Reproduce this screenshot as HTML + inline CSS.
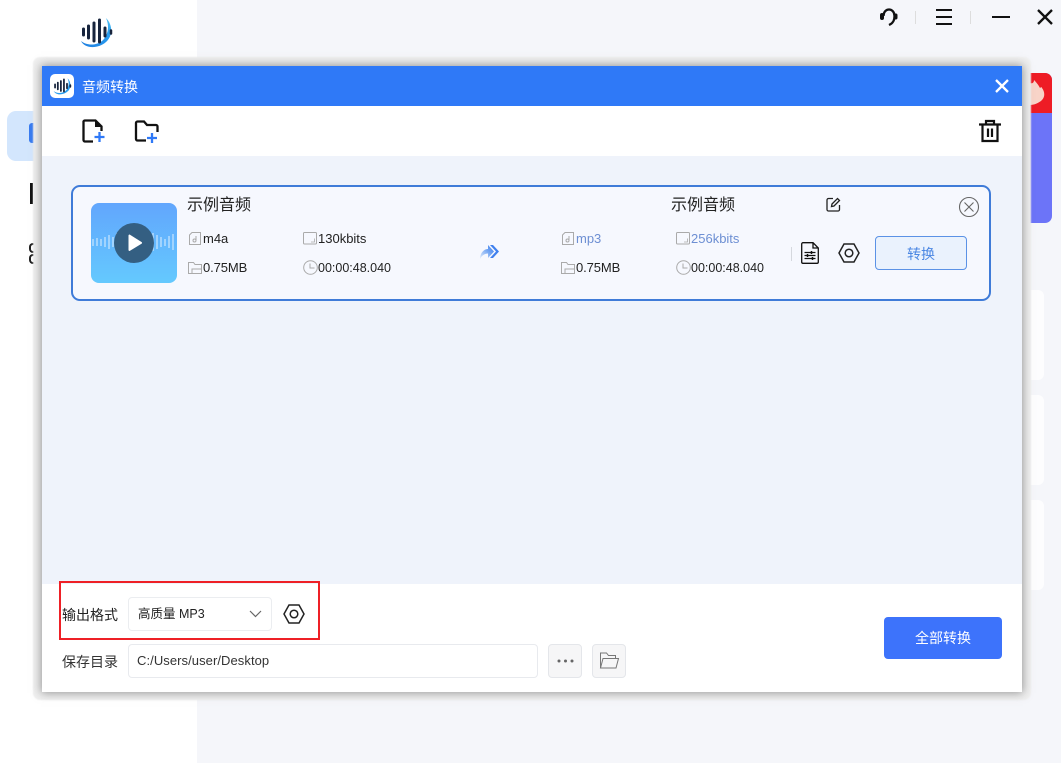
<!DOCTYPE html>
<html lang="zh-CN"><head><meta charset="utf-8"><title>音频转换</title>
<style>
*{box-sizing:border-box}
html,body{margin:0;padding:0;width:1061px;height:763px;overflow:hidden;background:#f5f6fa;font-family:"Liberation Sans","Noto Sans CJK SC",sans-serif;color:#222}
.a{position:absolute}
.t{position:absolute;white-space:nowrap;line-height:16px;font-size:12.5px;color:#222}
svg{position:absolute;overflow:visible}
</style></head><body>
<!-- background -->
<div class="a" style="left:0;top:0;width:197px;height:763px;background:#fff"></div>
<div class="a" style="left:7px;top:111px;width:60px;height:50px;background:#d3e6fd;border-radius:9px"></div>
<div class="a" style="left:29px;top:123px;width:8px;height:20px;background:#3a7cf0;border-radius:3px 0 0 3px"></div>
<div class="a" style="left:30px;top:183px;width:3px;height:21px;background:#111"></div>
<div class="a" style="left:29px;top:243px;width:6px;height:10px;border:2px solid #222;border-right:0;border-radius:4px 0 0 4px"></div>
<div class="a" style="left:29px;top:254px;width:6px;height:10px;border:2px solid #222;border-right:0;border-radius:4px 0 0 4px"></div>
<!-- logo -->
<svg style="left:78px;top:14px" width="36" height="36" viewBox="0 0 36 36"><defs><linearGradient id="sw" x1="0" y1="1" x2="1" y2="0"><stop offset="0" stop-color="#1f7fe0"/><stop offset=".7" stop-color="#2a9ff0"/><stop offset="1" stop-color="#58c8f5"/></linearGradient></defs><path d="M3 27C9 32 20 32 26 25 31 18 31 11 28 4 35 11 35 22 28 28 20 35 7 35 3 27Z" fill="url(#sw)"/><g stroke="#17243d" stroke-width="3" stroke-linecap="round"><path d="M5.500 15v6M10.500 12v12M16 9v18M21.500 6v22M27 14v8"/></g><path d="M33 16.500v3" stroke="#17243d" stroke-width="2.500" stroke-linecap="round"/></svg>
<!-- top icons -->
<svg style="left:879px;top:7px" width="20" height="20" viewBox="0 0 20 20" fill="none" stroke="#111" stroke-width="2.300"><path d="M4.500 9C4.500 5 7 2.500 10 2.500S15.500 5 15.500 9 14.500 16 10 18"/><rect x="1.500" y="6.500" width="3" height="6" rx="1.500" fill="#111" stroke-width="1"/><rect x="15.500" y="7" width="2.500" height="5" rx="1.200" fill="#111" stroke-width="1"/></svg>
<div class="a" style="left:915px;top:11px;width:1px;height:13px;background:#ddd"></div>
<div class="a" style="left:936px;top:9px;width:16px;height:16px;border-top:2px solid #111;border-bottom:2px solid #111"></div>
<div class="a" style="left:936px;top:16px;width:16px;height:2px;background:#111"></div>
<div class="a" style="left:970px;top:11px;width:1px;height:13px;background:#ddd"></div>
<div class="a" style="left:992px;top:16px;width:18px;height:2px;background:#111"></div>
<svg style="left:1037px;top:9px" width="16" height="16" fill="none" stroke="#111" stroke-width="2.300"><path d="M1 1l14 14M15 1L1 15"/></svg>
<!-- right peek -->
<div class="a" style="left:1030px;top:73px;width:22px;height:150px;background:#6c74f8;border-radius:0 7px 7px 0"></div>
<div class="a" style="left:1030px;top:73px;width:22px;height:40px;background:#ee1c25;border-radius:0 7px 0 0;overflow:hidden"></div>
<svg style="left:1030px;top:80px" width="17" height="26"><path d="M0 3C3 4 4 2 4 0 7 3 9 6 10 8 11 7 12 7 12 8 15 12 15 17 12 20 9 23 4 25 0 25Z" fill="#f8d4c8"/></svg>
<div class="a" style="left:1030px;top:290px;width:14px;height:90px;background:#fdfdfe;border-radius:0 6px 6px 0"></div>
<div class="a" style="left:1030px;top:395px;width:14px;height:90px;background:#fdfdfe;border-radius:0 6px 6px 0"></div>
<div class="a" style="left:1030px;top:500px;width:14px;height:90px;background:#fdfdfe;border-radius:0 6px 6px 0"></div>
<!-- dialog shadow band -->
<div class="a" style="left:33px;top:57px;width:998px;height:643px;background:#f0f0f0;border-radius:7px;filter:blur(.6px)"></div>
<div class="a" style="left:42px;top:66px;width:980px;height:626px;box-shadow:0 0 9px 1px rgba(90,90,90,.6)"></div>
<!-- dialog -->
<div class="a" style="left:42px;top:66px;width:980px;height:626px;background:#eff3fb"></div>
<div class="a" style="left:42px;top:66px;width:980px;height:40px;background:#2f79f7"></div>
<div class="a" style="left:42px;top:106px;width:980px;height:50px;background:#fff"></div>
<div class="a" style="left:42px;top:584px;width:980px;height:108px;background:#fff"></div>
<!-- title -->
<div class="a" style="left:50px;top:74px;width:24px;height:24px;background:#fff;border-radius:5px"></div>
<svg style="left:52px;top:76px" width="20" height="20" viewBox="0 0 36 36"><path d="M3 27C9 32 20 32 26 25 31 18 31 11 28 4 35 11 35 22 28 28 20 35 7 35 3 27Z" fill="#2a9ff0"/><g stroke="#17243d" stroke-width="3.200" stroke-linecap="round"><path d="M5.500 15v6M10.500 12v12M16 9v18M21.500 6v22M27 14v8M33 16.500v3"/></g></svg>
<div class="t" style="left:82px;top:79px;color:#fff;font-size:14px">音频转换</div>
<svg style="left:996px;top:80px" width="12" height="12" fill="none" stroke="#fff" stroke-width="2.300"><path d="M0 0l12 12M12 0L0 12"/></svg>
<!-- toolbar -->
<svg style="left:82px;top:119px" width="24" height="24" viewBox="0 0 24 24" fill="none"><path d="M11 22.500H3a1.500 1.500 0 0 1-1.500-1.500V2.500A1.500 1.500 0 0 1 3 1.500h10.500l6 6V12" stroke="#111" stroke-width="2.300"/><path d="M13 2l6 6h-6Z" fill="#111"/><path d="M17.500 13v10M12.500 18h10" stroke="#2f79f7" stroke-width="2.300"/></svg>
<svg style="left:135px;top:120px" width="25" height="23" viewBox="0 0 25 23" fill="none"><path d="M11 20.500H2.500A1.500 1.500 0 0 1 1 19V3A1.500 1.500 0 0 1 2.500 1.500H9l3 3.500h9a1.500 1.500 0 0 1 1.500 1.500V12" stroke="#111" stroke-width="2.300"/><path d="M17 13v10M12 18h10" stroke="#2f79f7" stroke-width="2.300"/></svg>
<svg style="left:979px;top:120px" width="22" height="22" viewBox="0 0 22 22" fill="none" stroke="#111" stroke-width="2.200"><path d="M0 4.500h22M7 4V1h8v3M3.500 5v16h15V5M9 8.500v8.500M13 8.500v8.500"/></svg>
<!-- card -->
<div class="a" style="left:71px;top:185px;width:920px;height:116px;background:#f6f8fe;border:2px solid #3f7bd8;border-radius:9px"></div>
<div class="a" style="left:91px;top:203px;width:86px;height:80px;border-radius:8px;background:linear-gradient(#62a6fd,#64c9fe)"></div>
<svg style="left:91px;top:222px" width="86" height="40" stroke="#fff" stroke-opacity=".4" stroke-width="2"><path d="M2 17v7M6 16v8M10 17v7M14 15v10M18 13v14M22 15v10M26 11v18M30 15v10M34 9v22M38 5v30M42 9v22M46 5v30M50 9v22M54 13v14M58 15v10M62 11v18M66 13v14M70 15v10M74 17v7M78 14v12M82 12v16"/></svg>
<div class="a" style="left:114px;top:223px;width:40px;height:40px;border-radius:50%;background:#345f82"></div>
<svg style="left:114px;top:223px" width="40" height="40"><path d="M14.500 12.500a1 1 0 0 1 1.500-.8L27.500 19a1 1 0 0 1 0 1.800L16 27.800a1 1 0 0 1-1.500-.8Z" fill="#fff"/></svg>
<div class="t" style="left:187px;top:197px;font-size:16px;line-height:18px">示例音频</div>
<div class="t" style="left:671px;top:197px;font-size:16px;line-height:18px">示例音频</div>
<svg style="left:826px;top:197px" width="15" height="15" viewBox="0 0 15 15" fill="none" stroke="#222" stroke-width="1.300"><path d="M7 1.500H2.500a1.500 1.500 0 0 0-1.500 1.500v9.500A1.500 1.500 0 0 0 2.500 14H12a1.500 1.500 0 0 0 1.500-1.500V8M5.500 9.500l.5-2.500 5.500-5.500 2 2L8 9Z"/></svg>
<svg style="left:959px;top:197px" width="20" height="20" fill="none" stroke="#666" stroke-width="1.100"><circle cx="10" cy="10" r="9.500"/><path d="M5.500 5.500l9 9M14.500 5.500l-9 9"/></svg>
<!-- meta -->
<svg style="left:189px;top:232px" width="13" height="13" fill="none" stroke="#aaa"><path d="M.5 3L3 .5h8.500v12H.5Z"/><circle cx="5.500" cy="8.500" r="1.500"/><path d="M7 8.500V4"/></svg>
<div class="t" style="left:203px;top:231px;font-size:13px">m4a</div>
<svg style="left:303px;top:232px" width="14" height="13" fill="none" stroke="#aaa"><rect x=".5" y=".5" width="13" height="11.500" rx="1"/><path d="M11.500 6.500v3.500H8" stroke-width=".8"/></svg>
<div class="t" style="left:318px;top:231px;font-size:13px">130kbits</div>
<svg style="left:188px;top:261px" width="14" height="13" fill="none" stroke="#aaa"><path d="M.5 12.500V1.500h5l1.500 2h6.500v9ZM4 12.500V8h9.500"/></svg>
<div class="t" style="left:203px;top:260px;font-size:13px;letter-spacing:-.1px">0.75MB</div>
<svg style="left:303px;top:260px" width="15" height="15" fill="none" stroke="#aaa"><circle cx="7.500" cy="7.500" r="6.800"/><path d="M7 3.500v4.500h4.500"/></svg>
<div class="t" style="left:318px;top:260px">00:00:48.040</div>
<svg style="left:480px;top:244px" width="20" height="17"><defs><linearGradient id="ar" x1="0" y1="1" x2="1" y2="0"><stop offset="0" stop-color="#e3edfc"/><stop offset=".6" stop-color="#6ea2f2"/><stop offset="1" stop-color="#3f80ee"/></linearGradient></defs><path d="M0 15C0 9 4 5 8 5V1l6 6.500-6 6.500V9.500C5 9.500 2 11 0 15Z" fill="url(#ar)"/><path d="M10 1l3 0 6 6.500-6 6.500-3 0 6-6.500Z" fill="#3f80ee"/></svg>
<svg style="left:562px;top:232px" width="13" height="13" fill="none" stroke="#aaa"><path d="M.5 3L3 .5h8.500v12H.5Z"/><circle cx="5.500" cy="8.500" r="1.500"/><path d="M7 8.500V4"/></svg>
<div class="t" style="left:576px;top:231px;color:#6d8fd3;font-size:13px">mp3</div>
<svg style="left:676px;top:232px" width="14" height="13" fill="none" stroke="#aaa"><rect x=".5" y=".5" width="13" height="11.500" rx="1"/><path d="M11.500 6.500v3.500H8" stroke-width=".8"/></svg>
<div class="t" style="left:691px;top:231px;color:#6d8fd3;font-size:13px">256kbits</div>
<svg style="left:561px;top:261px" width="14" height="13" fill="none" stroke="#aaa"><path d="M.5 12.500V1.500h5l1.500 2h6.500v9ZM4 12.500V8h9.500"/></svg>
<div class="t" style="left:576px;top:260px;font-size:13px;letter-spacing:-.1px">0.75MB</div>
<svg style="left:676px;top:260px" width="15" height="15" fill="none" stroke="#aaa"><circle cx="7.500" cy="7.500" r="6.800"/><path d="M7 3.500v4.500h4.500"/></svg>
<div class="t" style="left:691px;top:260px">00:00:48.040</div>
<div class="a" style="left:791px;top:247px;width:1px;height:14px;background:#d5d8de"></div>
<svg style="left:801px;top:242px" width="18" height="22" viewBox="0 0 18 22" fill="none" stroke="#111" stroke-width="1.300"><path d="M12 .7H2A1.300 1.300 0 0 0 .7 2v18A1.300 1.300 0 0 0 2 21.300h14a1.300 1.300 0 0 0 1.300-1.300V6ZM12 .7V6h5.300M3.500 10.500h11M3.500 13.500h11M3.500 16.500h11"/><path d="M10.500 9v3M6.500 12v3M11.500 15v3" stroke-width="1.500"/></svg>
<svg style="left:838px;top:243px" width="22" height="20" viewBox="0 0 22 20" fill="none" stroke="#222" stroke-width="1.500"><path d="M6 1h10l5 9-5 9H6L1 10Z"/><circle cx="11" cy="10" r="3.800"/></svg>
<div class="a" style="left:875px;top:236px;width:92px;height:34px;background:#eaf2fd;border:1px solid #5b92e6;border-radius:4px;text-align:center;line-height:34px;font-size:14px;color:#4b87e3">转换</div>
<!-- bottom -->
<div class="a" style="left:59px;top:581px;width:261px;height:59px;border:2px solid #ee2026"></div>
<div class="t" style="left:62px;top:607px;font-size:14px">输出格式</div>
<div class="a" style="left:128px;top:597px;width:144px;height:34px;border:1px solid #ebedf0;border-radius:4px;background:#fff"></div>
<div class="t" style="left:138px;top:606px;font-size:12.500px">高质量 MP3</div>
<svg style="left:249px;top:610px" width="13" height="8" fill="none" stroke="#666" stroke-width="1.200"><path d="M1 1l5.500 5.500L12 1"/></svg>
<svg style="left:283px;top:604px" width="22" height="20" viewBox="0 0 22 20" fill="none" stroke="#222" stroke-width="1.500"><path d="M6 1h10l5 9-5 9H6L1 10Z"/><circle cx="11" cy="10" r="3.800"/></svg>
<div class="t" style="left:62px;top:654px;font-size:14px;color:#333">保存目录</div>
<div class="a" style="left:128px;top:644px;width:410px;height:34px;border:1px solid #e8eaee;border-radius:4px;background:#fff"></div>
<div class="t" style="left:137px;top:653px;font-size:13px;letter-spacing:.07px;color:#333">C:/Users/user/Desktop</div>
<div class="a" style="left:548px;top:644px;width:34px;height:34px;border:1px solid #e4e6ea;border-radius:4px;background:#f6f6f7"></div>
<svg style="left:557px;top:659px" width="17" height="4" fill="#666"><circle cx="2" cy="2" r="1.500"/><circle cx="8.500" cy="2" r="1.500"/><circle cx="15" cy="2" r="1.500"/></svg>
<div class="a" style="left:592px;top:644px;width:34px;height:34px;border:1px solid #e4e6ea;border-radius:4px;background:#f6f6f7"></div>
<svg style="left:600px;top:652px" width="19" height="17" fill="none" stroke="#777"><path d="M.5 16V1h6l2 2.500h7V6.500M.5 16h15.500l2.500-9.500H3Z"/></svg>
<div class="a" style="left:884px;top:617px;width:118px;height:42px;background:#3d73fb;border-radius:4px;text-align:center;line-height:42px;color:#fff;font-size:14px">全部转换</div>
</body></html>
